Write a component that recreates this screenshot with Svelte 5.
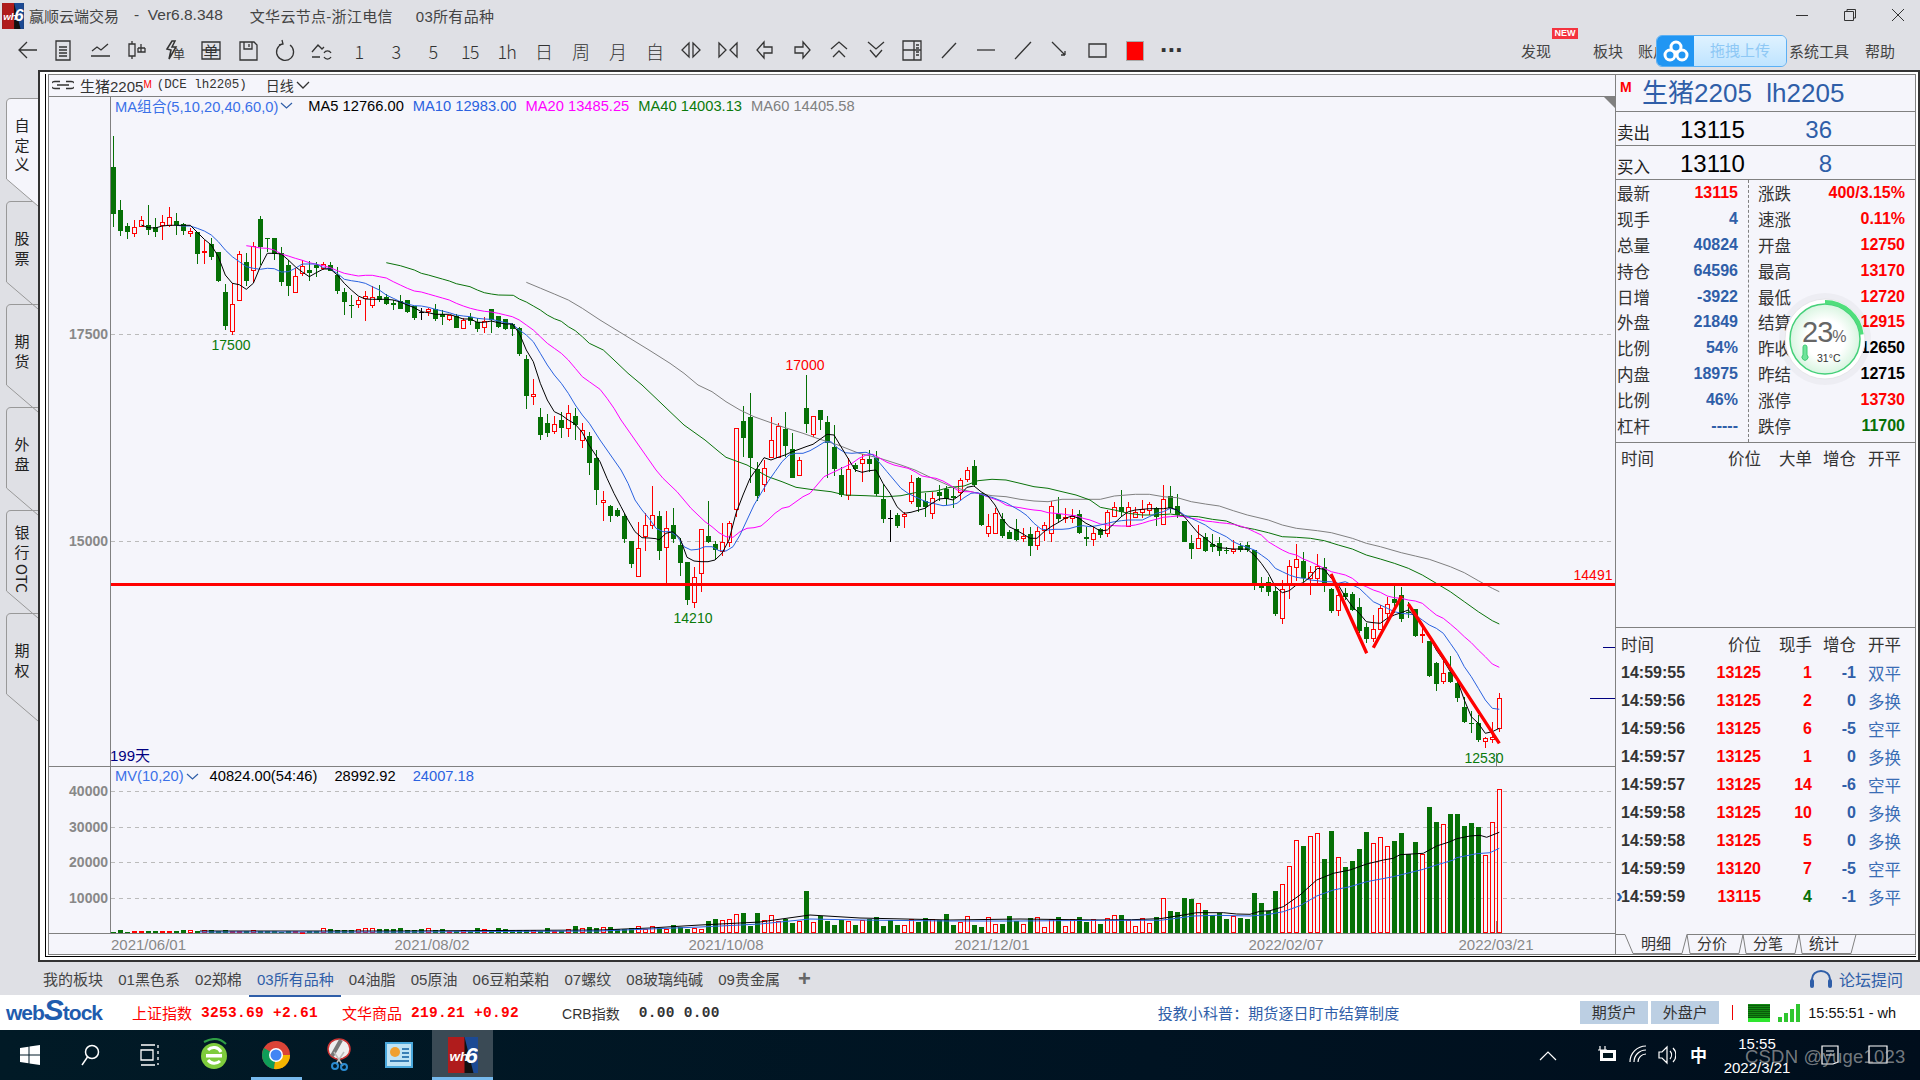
<script>
  const z = (bx, by, s) => s.trim().split(/\s+/).map(p => { const [x, y] = p.split(',').map(Number); return [bx + x / 3, by + y / 3]; });
  const toStr = a => a.map(p => p[0].toFixed(1) + ',' + p[1].toFixed(1)).join(' ');

  const c8 = [['g',48,141,281,320],['g',240,270,332,347],['g',310,318,335,358],['r',300,322,341,350],['r',288,301,319,322],['g',255,315,329,344],['g',295,322,338,350],['r',285,307,315,360],['r',262,292,315,320],['g',280,303,315,345],['g',310,313,335,345],['r',323,334,341,350],['g',336,336,401,432],['r',360,394,398,432],['g',355,372,411,420],['g',395,397,483,485],['g',492,516,617,630],['r',490,553,635,645],['r',393,403,540,542],['g',400,426,483,497],['r',367,377,449,490],['g',288,297,380,435],['g',355,355,359,395],['g',355,355,403,420],['g',382,400,488,497],['g',420,435,497,527],['r',445,469,518,518],['r',420,438,458,468],['g',423,450,458,482],['g',425,435,443,470],['r',425,433,445,450],['g',427,435,452,452],['g',442,465,513,522],['g',505,517,548,585],['g',525,556,560,593],['r',530,541,554,563],['r',513,529,534,603],['r',497,532,557,563],['g',495,528,540,545],['g',522,532,552,555],['g',540,549,554,570],['g',525,543,566,568],['g',540,541,578,580],['g',558,558,594,600],['k',565,576,578,600],['r',565,568,574,587],['g',553,567,597,602],['g',570,582,590,615],['r',585,585,597,602],['g',583,587,624,624],['r',595,601,626,626],['g',578,590,603,615],['g',595,607,627,637],['r',592,602,620,638],['g',567,568,600,640],['g',588,589,622,625],['g',598,598,628,630],['g',610,612,628,648],['g',622,624,702,707],['g',706,718,830,866],['r',777,823,830,855]];
  const cGap = [['g',408,417,435,440],['g',414,423,433,437],['r',416,424,431,434],['g',412,420,428,438],['r',405,413,428,437],['g',408,416,425,440],['r',423,430,440,448],['g',432,436,463,475],['g',450,458,490,505]];
  const c9 = [['r',423,450,455,513],['g',465,468,498,515],['g',473,480,498,500],['g',490,497,567,580],['g',573,573,641,655],['r',517,595,678,680],['r',490,526,560,602],['r',408,496,526,537],['g',482,498,602,630],['r',484,535,593,703],['g',475,525,567,580],['g',565,585,639,678],['g',636,636,750,765],['r',652,682,758,773],['r',537,537,668,725],['g',453,558,577,580],['g',573,582,600,628],['r',518,577,605,617],['r',513,519,575,590],['r',235,235,479,500],['g',168,213,264,322],['g',129,201,324,400],['g',337,358,438,452],['r',330,355,404,426],['r',202,270,320,325],['r',220,229,321,322],['g',185,237,287,320],['g',250,297,384,384],['r',322,331,377,378],['g',75,174,222,250],['r',198,198,251,262],['g',180,180,210,240],['g',197,216,280,385],['g',225,291,357,378],['g',350,375,435,442],['r',325,358,435,450],['g',340,345,358,365],['r',313,328,341,395],['g',300,327,342,365],['g',303,323,432,437],['g',402,447,507,518],['k',480,505,507,576],['g',490,495,527,535],['r',487,492,499,533],['r',375,397,455,462],['g',380,384,470,485],['g',430,453,472,500],['r',425,445,490,507],['g',405,427,440,452],['g',407,417,447,465],['g',410,438,443,475],['r',385,391,428,450],['r',350,361,389,395],['g',330,348,405,410],['g',428,430,527,527],['r',492,529,551,560],['r',473,490,551,552],['g',490,507,558,565],['g',540,547,567,567],['g',508,538,570,572],['r',535,559,566,575],['g',530,552,588,617],['r',530,544,587,600],['r',515,525,541,572],['r',453,469,551,575],['g',442,491,507,518],['r',475,502,506,518],['r',478,498,503,518],['g',480,492,550,552],['g',530,562,569,587],['r',530,550,569,587]];
  const c10 = [['g',203,207,225,233],['r',150,157,221,230],['r',125,142,170,170],['g',90,142,157,170],['r',127,142,200,200],['r',140,155,170,170],['r',120,146,155,175],['r',125,133,150,165],['g',140,145,172,197],['r',75,118,194,194],['g',77,108,145,160],['g',102,138,165,175],['g',183,183,245,245],['g',225,250,267,297],['r',195,235,265,265],['g',220,232,274,276],['g',222,252,260,275],['g',230,250,275,288],['g',262,270,274,282],['r',240,268,274,282],['g',250,258,270,275],['g',245,255,270,275],['g',270,270,372,390],['g',350,372,383,395],['g',350,366,396,408],['g',380,393,462,468],['r',360,388,476,492],['r',300,319,372,417],['r',252,297,320,362],['g',275,303,355,365],['r',318,337,355,405],['r',282,318,353,370],['g',295,320,368,397],['g',385,387,453,460],['r',380,406,452,468],['g',385,399,411,420],['g',395,403,450,452],['g',415,441,512,520],['g',490,502,538,550],['r',465,508,536,545],['r',435,445,508,510],['r',412,431,459,480],['g',378,418,430,458],['g',380,406,477,485],['g',425,456,460,475],['g',447,447,527,530],['r',490,523,527,548],['g',543,543,648,650],['g',605,608,670,692],['r',590,640,665,672],['g',588,635,666,668],['g',655,668,713,725],['g',712,741,785,790],['g',752,790,793,818],['g',765,789,840,846],['r',830,835,844,863],['r',785,832,838,848],['r',700,715,806,815]];

  const conv = (arr, by, k) => arr.map(([c, a, b, d, e]) => [c, by + a / k, by + b / k, by + d / k, by + e / k]);
  const candles = [...conv(c8, 120, 3), ...conv(cGap, 0, 1), ...conv(c9, 350, 3), ...conv(c10, 460, 3)].map((c, i) => {
    const cx = Math.round(113.3 + 7 * i) + 0.5;
    return { cx, c: c[0], wt: c[1], bt: c[2], bb: c[3], wb: c[4] };
  });

  const volTop = [[492,'g'],[475,'r'],[466,'r'],[465,'g'],[480,'r'],[499,'r'],[475,'r'],[490,'r'],[471,'g'],[415,'r'],[453,'g'],[456,'g'],[414,'g'],[417,'g'],[430,'r'],[450,'g'],[465,'g'],[460,'g'],[477,'g'],[468,'r'],[474,'g'],[477,'g'],[399,'g'],[429,'g'],[454,'g'],[393,'g'],[373,'r'],[319,'r'],[241,'r'],[258,'g'],[229,'r'],[220,'r'],[297,'g'],[213,'g'],[292,'r'],[321,'g'],[303,'g'],[267,'g'],[216,'g'],[250,'r'],[232,'r'],[259,'r'],[243,'g'],[219,'g'],[283,'g'],[246,'g'],[283,'r'],[141,'g'],[186,'g'],[193,'r'],[162,'g'],[162,'g'],[198,'g'],[189,'g'],[201,'g'],[286,'r'],[187,'r'],[88,'r']];
  const noise = i => { const v = Math.sin(i * 12.9898) * 43758.5453; return v - Math.floor(v); };
  const bars = [];
  for (let i = 0; i < 199; i++) {
    const cx = candles[i].cx;
    if (i < 141) {
      let base = i < 30 ? 1.2 : i < 65 ? 2 : i < 85 ? 3.5 : 5;
      let h = base + noise(i) * base * 1.6;
      if (i >= 85 && i < 110) h += noise(i + 7) * 7;
      if (i >= 110) h += noise(i + 3) * 6;
      if (i === 99) h = 42;
      if (i === 90 || i === 92) h = 20;
      bars.push({ cx, y: 933 - h, h, c: candles[i].c === 'r' ? 'r' : 'g' });
    } else {
      const [t, c] = volTop[i - 141];
      const y = 760 + t / 3;
      bars.push({ cx, y, h: 933 - y, c });
    }
  }

  const ma5 = toStr([...z(100,120,'124,315 145,323 166,324 187,318 208,316 229,316 250,316 271,316 292,337 313,358 334,375 355,410 376,465 397,490 418,494 439,508 460,490 481,440 502,400 523,400 544,402 565,420 586,440 607,456 628,470 649,458 670,447 691,447 712,465 733,490 754,510 775,528 796,537 817,538 838,538 859,538 880,540 901,546 922,555 943,563 964,575 985,578 1006,583 1027,583 1048,583 1069,590 1090,597 1111,597 1132,607 1153,607 1174,603 1195,608 1216,612 1237,612 1258,640 1279,690 1300,725 1321,790 1342,840 1363,875 1384,885 1405,900'),[575,424],[582,432],[589,445],...z(600,350,'0,335 21,385 42,430 63,470 84,510 105,545 126,563 147,564 168,566 177,570 198,550 219,545 240,565 261,622 282,633 303,635 324,635 345,630 366,610 387,570 408,490 429,435 450,385 471,355 492,323 513,330 534,322 555,315 576,305 597,298 618,290 639,283 660,268 681,253 702,255 723,290 744,325 765,360 786,367 807,362 828,360 849,400 870,430 891,470 912,490 933,487 954,481 975,475 996,460 1017,447 1038,445 1059,450 1080,435 1101,412 1122,408 1143,425 1164,438 1185,465 1206,505 1227,530 1248,540 1269,552 1290,565 1311,565 1332,545 1353,530 1374,518 1395,505 1416,498 1437,505 1458,520 1479,530'),...z(1100,460,'1,213 22,210 43,190 64,170 85,155 106,150 127,148 148,146 169,146 190,146 211,143 232,150 253,170 274,195 295,220 316,235 337,252 358,263 379,265 400,267 421,267 442,268 463,285 484,310 505,340 526,380 547,398 568,392 589,375 610,368 631,350 652,325 673,328 694,355 715,375 736,410 757,440 778,460 799,485 820,488 841,490 862,475 883,465 904,458 925,450 946,470 967,495 988,530 1009,570 1030,600 1051,635 1072,660 1093,720 1114,770 1135,790 1156,820 1177,815 1198,805')]);
  const ma10 = toStr([...z(100,120,'229,316 250,318 271,318 292,325 313,333 334,345 355,365 376,390 397,410 418,425 439,440 460,445 481,448 502,445 523,446 544,456 565,455 586,445 607,432 628,432 649,432 670,443 691,447 712,460 733,478 754,482 775,485 796,490 817,500 838,510 859,525 880,535 901,545 922,552 943,557 964,558 985,562 1006,568 1027,573 1048,578 1069,585 1090,588 1111,590 1132,595 1153,597 1174,598 1195,603 1216,608 1237,612 1258,630 1279,645 1300,665 1321,700 1342,735 1363,765 1384,790 1405,820 1426,855 1447,885 1468,910'),...z(600,350,'0,270 21,300 42,330 63,360 84,400 105,450 126,480 147,505 168,535 189,545 210,545 231,558 252,590 273,600 294,598 315,590 336,590 357,602 378,603 399,590 420,555 441,510 462,465 483,430 504,395 525,365 546,335 567,315 588,310 609,310 630,302 651,290 672,277 693,275 714,295 735,308 756,310 777,308 798,307 819,315 840,340 861,365 882,390 903,415 924,430 945,440 966,450 987,458 1008,462 1029,467 1050,465 1071,460 1092,443 1113,430 1134,428 1155,437 1176,442 1197,450 1218,458 1239,470 1260,482 1281,497 1302,520 1323,537 1344,540 1365,538 1386,538 1407,536 1428,530 1449,527 1470,530 1491,527'),...z(1100,460,'1,195 22,190 43,185 64,182 85,180 106,180 127,180 148,170 169,160 190,155 211,145 232,150 253,165 274,175 295,185 316,195 337,210 358,220 379,230 400,245 421,255 442,262 463,270 484,285 505,300 526,325 547,335 568,345 589,352 610,355 631,360 652,362 673,365 694,365 715,370 736,365 757,375 778,385 799,405 820,425 841,435 862,445 883,455 904,460 925,462 946,465 967,480 988,495 1009,505 1030,520 1051,550 1072,580 1093,620 1114,650 1135,685 1156,720 1177,745 1198,748')]);
  const ma20 = toStr([...z(100,120,'439,377 460,380 481,384 502,385 523,390 544,402 565,408 586,415 607,421 628,428 649,433 670,437 691,443 712,452 733,460 754,464 775,468 796,466 817,466 838,470 859,474 880,485 901,495 922,505 943,513 964,516 985,522 1006,528 1027,534 1048,540 1069,550 1090,558 1111,565 1132,570 1153,574 1174,576 1195,580 1216,585 1237,590 1258,600 1279,615 1300,630 1321,650 1342,670 1363,685 1384,700 1405,720 1426,745 1447,770 1468,785'),...z(600,350,'0,118 21,145 42,175 63,210 84,240 105,270 126,300 147,330 168,360 189,385 210,405 231,425 252,450 273,475 294,495 315,515 336,530 357,548 378,560 399,562 420,545 441,535 462,533 483,528 504,510 525,490 546,475 567,470 588,455 609,440 630,430 651,405 672,380 693,370 714,360 735,350 756,340 777,325 798,315 819,313 840,325 861,337 882,345 903,350 924,355 945,365 966,378 987,382 1008,385 1029,393 1050,405 1071,420 1092,425 1113,425 1134,430 1155,437 1176,445 1197,452 1218,465 1239,470 1260,473 1281,477 1302,480 1323,482 1344,488 1365,490 1386,492 1407,495 1428,497 1449,505 1470,510 1491,518'),...z(1100,460,'1,192 22,195 43,197 64,198 85,198 106,195 127,190 148,183 169,178 190,172 211,170 232,168 253,170 274,175 295,178 316,183 337,185 358,188 379,190 400,193 421,198 442,205 463,215 484,225 505,245 526,258 547,270 568,280 589,285 610,297 631,305 652,315 673,325 694,335 715,340 736,345 757,355 778,372 799,380 820,390 841,397 862,408 883,413 904,415 925,420 946,423 967,430 988,448 1009,465 1030,475 1051,492 1072,510 1093,530 1114,548 1135,570 1156,590 1177,612 1198,622')]);
  const ma40 = toStr([...z(100,120,'859,428 901,437 943,450 964,460 985,465 1027,477 1048,483 1069,491 1110,500 1132,510 1153,518 1174,522 1195,525 1240,526 1258,537 1279,546 1300,558 1321,570 1342,585 1363,596 1384,604 1405,620 1426,632 1447,650 1468,670'),...z(600,350,'10,0 42,30 84,70 126,105 168,145 210,185 252,225 273,240 315,270 357,305 378,322 441,345 504,380 546,395 588,412 630,418 693,425 735,435 798,437 861,440 903,437 945,428 1008,423 1050,412 1092,408 1134,392 1176,388 1218,390 1260,400 1302,410 1344,415 1386,425 1428,435 1470,450'),...z(1100,460,'1,142 43,150 85,160 127,165 169,165 211,162 253,168 295,170 337,178 379,183 421,200 463,208 505,218 547,230 589,232 631,235 673,242 715,255 757,267 799,285 841,297 883,310 925,325 967,345 1009,370 1051,395 1093,425 1135,455 1177,482 1198,492')]);
  const ma60 = toStr([...z(100,120,'1279,487 1322,505 1363,522 1405,540 1447,565 1500,600'),...z(600,350,'147,0 210,40 252,70 294,105 336,125 378,155 420,180 462,200 504,215 546,230 609,250 651,265 714,285 777,310 840,325 903,345 945,360 987,380 1050,408 1092,420 1134,430 1176,437 1218,440 1260,448 1302,453 1344,455 1386,448 1428,448 1470,448'),...z(1100,460,'1,118 43,108 106,103 148,103 190,110 232,113 274,125 316,132 358,138 400,152 442,165 505,180 547,195 589,205 652,212 694,218 757,235 799,250 841,260 904,278 946,288 988,298 1051,320 1093,338 1135,362 1177,385 1198,395')]);
  const mvK = toStr([[200,931],[400,931],[600,930],[650,928],[700,925],[760,922],[810,915],[860,918],[950,920],[1020,919],[1100,920],...z(1100,760,'55,479 95,479 180,476 250,465 290,458 370,458 410,462 450,463 480,454 510,452 550,440 600,405 650,360 700,340 750,330 800,312 850,300 880,295 900,284 970,280 1010,258 1050,245 1070,236 1110,228 1140,226 1160,232 1198,217')]);
  const mvB = toStr([[200,932],[400,932],[600,931],[650,929],[700,927],[760,924],[810,919],[860,920],[950,921],[1020,921],...z(1100,760,'0,481 180,481 220,476 280,468 350,466 450,468 500,464 550,455 600,437 650,408 700,390 750,380 800,365 880,350 970,328 1000,318 1060,300 1070,293 1130,281 1170,278 1198,265')]);

  const toolsA = [
    'M22 11H5M12 3l-8 8 8 8',
    'M4 2h14v19H4zM7 8h8M7 11h8M7 14h8M7 17h8',
    'M2 17h19M3 12l5-4 4 3 7-6',
    'M6 2v3M3 5h6v12H3zM6 17v3M15 5v5M12 9h7M15 9v4M12 9v4h7V9',
    null,
    null,
    'M3 3h14l3 3v15H3zM7 3v7h8V3M12 5v3',
    'M16 6a8.500 8.500 0 1 1-8-1M8 1l1 4-4 1',
    'M2 13l6-7 4 4 2-2M2 18h8M14 14a4 4 0 0 1 7 0M21 18a4 4 0 0 1-7 0'
  ];
  const txt = ['1', '3', '5', '15', '1h', '日', '周', '月', '自'];
  const toolsB = [
    'M9 4L2 11l7 7zM13 4l7 7-7 7z',
    'M2 4l7 7-7 7zM20 4l-7 7 7 7z',
    'M10 3L3 11l7 8v-5h8V8h-8z',
    'M12 3l7 8-7 8v-5H4V8h8z',
    'M3 10l8-7 8 7M5 18l6-6 6 6',
    'M3 3l8 7 8-7M5 11l6 7 6-7',
    'M2 2h18v19H2zM2 11h18M13 2v19M15 6h3M15 9h3M15 13h3M15 16h3',
    'M4 19L18 4',
    'M2 11h18',
    'M4 19L18 4M3 20l2-2M17 5l2-2',
    'M3 3l13 13M16 16v-4M16 16h-4',
    'M3 5h17v13H3z'
  ];

  const left = [['最新','13115','red'],['现手','4','blue'],['总量','40824','blue'],['持仓','64596','blue'],['日增','-3922','blue'],['外盘','21849','blue'],['比例','54%','blue'],['内盘','18975','blue'],['比例','46%','blue'],['杠杆','-----','blue']];
  const right = [['涨跌','400/3.15%','red'],['速涨','0.11%','red'],['开盘','12750','red'],['最高','13170','red'],['最低','12720','red'],['结算','12915','red'],['昨收','12650','black'],['昨结','12715','black'],['涨停','13730','red'],['跌停','11700','green']];
  const trades = [['14:59:55','13125','1','-1','双平'],['14:59:56','13125','2','0','多换'],['14:59:56','13125','6','-5','空平'],['14:59:57','13125','1','0','多换'],['14:59:57','13125','14','-6','空平'],['14:59:58','13125','10','0','多换'],['14:59:58','13125','5','0','多换'],['14:59:59','13120','7','-5','空平'],['14:59:59','13115','4','-1','多平']];
  const sideTabs = [['自定义'], ['股票'], ['期货'], ['外盘'], ['银行', 'OTC'], ['期权']];
  const blocks = ['我的板块', '01黑色系', '02郑棉', '03所有品种', '04油脂', '05原油', '06豆粕菜粕', '07螺纹', '08玻璃纯碱', '09贵金属'];
  const dates = [['2021/06/01', 148.5], ['2021/08/02', 432], ['2021/10/08', 726], ['2021/12/01', 992], ['2022/02/07', 1286], ['2022/03/21', 1496]];
  const volAxis = [['40000', 791], ['30000', 827], ['20000', 862], ['10000', 898]];
  const subTabs = ['明细', '分价', '分笔', '统计'];
</script>

{#snippet whLogo(w, h)}
  <svg width={w} height={h} viewBox="0 0 20 24">
    <rect width="20" height="24" fill="#111" />
    <rect width="11" height="24" fill="#b01c1c" />
    <path d="M11 0h9v24h-3z" fill="#1c4a94" />
    <text x="1" y="16" class="wh">wh</text>
    <text x="11.500" y="17" class="six">6</text>
  </svg>
{/snippet}

<div class="screen">
  <header class="titlebar">
    <span class="logo">{@render whLogo(22, 26)}</span>
    <span class="t1">赢顺云端交易</span>
    <span class="t2">-&nbsp; Ver6.8.348</span>
    <span class="t3">文华云节点-浙江电信</span>
    <span class="t4">03所有品种</span>
    <div class="winbtns">
      <svg width="14" height="14" viewBox="0 0 14 14"><path d="M1 7.500h12" /></svg>
      <svg width="14" height="14" viewBox="0 0 14 14"><path d="M1.500 3.500h9v9h-9zM4 3.500V1.500h8.500V10h-2" /></svg>
      <svg width="14" height="14" viewBox="0 0 14 14"><path d="M1 1l12 12M13 1L1 13" /></svg>
    </div>
  </header>

  <nav class="toolbar">
    {#each toolsA as d, i}
      <span class="tool">
        <svg width="23" height="23" viewBox="0 0 23 23">
          {#if d}
            <path {d} />
          {:else if i === 4}
            <path d="M4 10L9 2h3L9 8h4L6 20l2-9z" class="solidish" />
            <text x="10" y="20" class="mini">单</text>
          {:else}
            <path d="M2 3h18v17H2zM2 11h18" />
            <text x="3.500" y="18" class="mini big">单</text>
          {/if}
        </svg>
      </span>
    {/each}
    {#each txt as t}<span class="tool txt">{t}</span>{/each}
    {#each toolsB as d}
      <span class="tool"><svg width="23" height="23" viewBox="0 0 23 23"><path {d} /></svg></span>
    {/each}
    <span class="tool"><span class="redsq"></span></span>
    <span class="tool dots">···</span>
    <div class="menu">
      <span class="m-find">发现<b class="new">NEW</b></span>
      <span class="m-block">板块</span>
      <span class="m-acct">账户</span>
      <span class="m-sys">系统工具</span>
      <span class="m-help">帮助</span>
    </div>
  </nav>

  <div class="pill">
    <span class="pill-ic">
      <svg width="26" height="22" viewBox="0 0 26 22"><circle cx="13" cy="7" r="5" /><circle cx="7" cy="15" r="5" /><circle cx="19" cy="15" r="5" /></svg>
    </span>
    <span class="pill-t">拖拽上传</span>
  </div>

  <main class="body">
    <aside class="side">
      {#each sideTabs as [t, latin], i}
        <div class="stab" class:stab-on={i === 0}>
          <svg class="stab-bg" width="32" height="109" viewBox="0 0 32 109"><path d="M32 .5H5Q.5 .5 .5 5V81L32 108" /></svg>
          <span class="stab-t">{t}{#if latin}<span class="otc">{latin}</span>{/if}</span>
        </div>
      {/each}
    </aside>

    <section class="frame">
      <div class="frame-in">
        <div class="term">
          <div class="chartcol">
            <div class="chead">
              <svg class="link" width="22" height="10" viewBox="0 0 22 10"><path d="M8 1.500H3a3.500 3 0 0 0 0 7h5M14 1.500h5a3.500 3 0 0 1 0 7h-5M5 5h12" /></svg>
              <span class="cname">生猪2205<sup>M</sup></span>
              <span class="ccode">(DCE lh2205)</span>
              <span class="cper">日线<svg width="14" height="8" viewBox="0 0 14 8"><path d="M1 1l6 6 6-6" /></svg></span>
            </div>
            <div class="chart">
              <svg class="plot" width="1566" height="858" viewBox="49 96 1566 858">
                <path class="axis" d="M110.500 96V933.500M49 933.500H1616M49 766.500H1616" />
                <path class="corner" d="M1603 96h12v12z" />
                <path class="grid" d="M111 334.500H1615M111 541.500H1615" />
                {#each volAxis as [, y]}<path class="grid" d="M111 {y + .5}H1615" />{/each}
                <text class="yl" x="108" y="339">17500</text>
                <text class="yl" x="108" y="546">15000</text>
                {#each volAxis as [l, y]}<text class="yl" x="108" y={y + 5}>{l}</text>{/each}

                {#each candles as k}
                  <path class={'wick ' + k.c} d="M{k.cx} {k.wt.toFixed(1)}V{k.wb.toFixed(1)}" />
                  {#if k.c === 'r'}
                    <rect class="body-r" x={k.cx - 2} y={Math.round(k.bt) + .5} width="4" height={Math.max(1, Math.round(k.bb - k.bt))} />
                  {:else if k.c === 'g'}
                    <rect class="body-g" x={k.cx - 2.5} y={Math.round(k.bt)} width="5" height={Math.max(1, Math.round(k.bb - k.bt))} />
                  {:else}
                    <path class="wick k" d="M{k.cx - 2.500} {k.bt.toFixed(0)}.500h5" />
                  {/if}
                {/each}

                <polyline class="ma m60" points={ma60} />
                <polyline class="ma m40" points={ma40} />
                <polyline class="ma m20" points={ma20} />
                <polyline class="ma m10" points={ma10} />
                <polyline class="ma m5" points={ma5} />

                <path class="hline" d="M111 584.500H1615" />
                <path class="draw" d="M1331 574L1366.700 653.300M1373.300 647.700L1401.700 596M1408.300 604L1499.300 743.300" />
                <path class="tick" d="M1603 647.500H1615M1590 698.500H1615" />
                <path class="cursor" d="M1496.500 753V766M1496.500 921V933" />

                <text class="lb green" x="231" y="350">17500</text>
                <text class="lb red" x="805" y="370">17000</text>
                <text class="lb green" x="693" y="623">14210</text>
                <text class="lb green" x="1484" y="763">12530</text>
                <text class="lb red" x="1593" y="580">14491</text>

                {#each bars as b}
                  {#if b.c === 'r'}
                    <rect class="body-r" x={b.cx - 2} y={Math.round(b.y) + .5} width="4" height={Math.max(1, Math.round(b.h) - 1)} />
                  {:else}
                    <rect class="body-g" x={b.cx - 2.5} y={Math.round(b.y)} width="5" height={Math.round(b.h)} />
                  {/if}
                {/each}
                <polyline class="ma mv-k" points={mvK} />
                <polyline class="ma mv-b" points={mvB} />

                {#each dates as [d, x]}<text class="dl" {x} y="950">{d}</text>{/each}
              </svg>

              <div class="legend l1">
                <span class="ma-combo">MA组合(5,10,20,40,60,0)<svg width="13" height="7" viewBox="0 0 13 7"><path d="M1 1l5.500 5 5.500-5" /></svg></span>
                <span class="c-k">MA5 12766.00</span>
                <span class="c-b">MA10 12983.00</span>
                <span class="c-m">MA20 13485.25</span>
                <span class="c-g">MA40 14003.13</span>
                <span class="c-y">MA60 14405.58</span>
              </div>
              <div class="days">199天</div>
              <div class="legend l2">
                <span class="ma-combo">MV(10,20)<svg width="13" height="7" viewBox="0 0 13 7"><path d="M1 1l5.500 5 5.500-5" /></svg></span>
                <span class="c-k">40824.00(54:46)</span>
                <span class="c-k">28992.92</span>
                <span class="c-b">24007.18</span>
              </div>
            </div>
          </div>

          <aside class="panel">
            <div class="p-title"><b>M</b><span>生猪2205&nbsp; lh2205</span></div>
            <div class="quote"><span class="q-l">卖出</span><span class="q-p">13115</span><span class="q-v">36</span></div>
            <div class="quote"><span class="q-l">买入</span><span class="q-p">13110</span><span class="q-v">8</span></div>
            <div class="stats">
              <div class="col c-left">
                {#each left as [a, b, c]}<div class="st"><span>{a}</span><b class={c}>{b}</b></div>{/each}
              </div>
              <div class="col c-right">
                {#each right as [a, b, c]}<div class="st"><span>{a}</span><b class={c}>{b}</b></div>{/each}
              </div>
            </div>
            <div class="tsec top">
              <div class="tr th"><span>时间</span><span>价位</span><span>大单</span><span>增仓</span><span>开平</span></div>
            </div>
            <div class="tsec bottom">
              <div class="tr th"><span>时间</span><span>价位</span><span>现手</span><span>增仓</span><span>开平</span></div>
              {#each trades as [t, p, v, d, o], i}
                <div class="tr td">
                  <span class="tm">{t}</span><span class="red">{p}</span><span class={i === 8 ? 'green' : 'red'}>{v}</span><span class="blue">{d}</span><span class="op">{o}</span>
                  {#if i === 8}<i class="rowmark">›</i>{/if}
                </div>
              {/each}
            </div>
            <div class="subtabs">
              <svg class="st-bg" width="299" height="20" viewBox="0 0 299 20"><path d="M0 .5H9L17 19.500H66L71 .5M71 .5L74 19.500H123L127 .5M127 .5L130 19.500H179L183 .5M183 .5L186 19.500H235L240 .5M71 .5H299" /></svg>
              {#each subTabs as s}<span>{s}</span>{/each}
            </div>
          </aside>
        </div>
      </div>
    </section>
  </main>

  <div class="gauge">
    <svg width="96" height="96" viewBox="0 0 96 96">
      <defs><radialGradient id="gfill"><stop offset="55%" stop-color="#ffffff" /><stop offset="100%" stop-color="#d8f5e0" /></radialGradient></defs>
      <circle cx="48" cy="48" r="46" fill="#000" opacity=".03" />
      <circle cx="48" cy="48" r="40" fill="#fff" stroke="#e6e6ea" />
      <circle cx="48" cy="48" r="35" fill="url(#gfill)" stroke="#45d07a" stroke-width="1.500" />
      <circle cx="48" cy="48" r="37" fill="none" stroke="#50de7c" stroke-width="4" stroke-dasharray="53.500 300" transform="rotate(-90 48 48)" />
      <path d="M26 64a3 3 0 1 0 4 0v-8a2 2 0 0 0-4 0z" fill="#6fe39a" stroke="#3ccb72" />
    </svg>
    <span class="g-num">23<small>%</small></span>
    <span class="g-temp">31°C</span>
  </div>

  <div class="blocks">
    {#each blocks as b, i}<span class:on={i === 3}>{b}</span>{/each}
    <span class="plus">+</span>
    <span class="forum">
      <svg width="24" height="18" viewBox="0 0 24 18"><path d="M3 13V9a9 8 0 0 1 18 0v4" /><rect x="1" y="9" width="4" height="9" rx="2" /><rect x="19" y="9" width="4" height="9" rx="2" /></svg>
      论坛提问
    </span>
  </div>

  <footer class="status">
    <span class="ws">web<em>S</em>tock</span>
    <span class="i1 red">上证指数</span><b class="iv red">3253.69 +2.61</b>
    <span class="i2 red">文华商品</span><b class="iv red">219.21 +0.92</b>
    <span class="i3">CRB指数</span><b class="iv i3v">0.00 0.00</b>
    <span class="tip">投教小科普：期货逐日盯市结算制度</span>
    <span class="acct a1">期货户</span>
    <span class="acct">外盘户</span>
    <i class="rdiv"></i>
    <span class="meter"></span>
    <span class="signal">{#each [5, 9, 13, 18] as h}<i class="sg{h}"></i>{/each}</span>
    <span class="clock">15:55:51 - wh</span>
  </footer>

  <div class="taskbar">
    <span class="tb win"><svg width="22" height="22" viewBox="0 0 22 22"><path fill="#fff" d="M1 4l8.500-1.300V10.500H1zM10.500 2.500L21 1V10.500H10.500zM1 11.500h8.500v7.800L1 18zM10.500 11.500H21V21l-10.500-1.500z" /></svg></span>
    <span class="tb search"><svg width="22" height="24" viewBox="0 0 22 24"><circle cx="13" cy="9" r="6.500" /><path d="M8.500 14L3 22" /></svg></span>
    <span class="tb view"><svg width="22" height="24" viewBox="0 0 22 24"><path d="M2 2h14M2 22h14M2 7h12v10H2zM19 2v3M19 8v3M19 14v3M19 20v2" /></svg></span>
    <span class="tb ie"><svg width="30" height="34" viewBox="0 0 30 34"><circle cx="15" cy="18" r="13" fill="#7ecb3c" /><path d="M5 4q13-7 22 2" stroke="#2f9e44" stroke-width="2" /><rect x="7" y="16" width="16" height="3.500" fill="#fff" /><path d="M9 12a8 8 0 0 1 13 2M21 23a8 8 0 0 1-12-1" stroke="#fff" stroke-width="3" /></svg></span>
    <span class="tb chrome"><svg width="30" height="30" viewBox="0 0 30 30"><circle cx="15" cy="15" r="14" fill="#db4437" /><path d="M15 15L3 8a14 14 0 0 0 10 21z" fill="#0f9d58" /><path d="M15 15h14a14 14 0 0 1-16 14z" fill="#f4b400" /><circle cx="15" cy="15" r="7" fill="#fff" /><circle cx="15" cy="15" r="5.500" fill="#4285f4" /></svg></span>
    <span class="tb snip"><svg width="30" height="34" viewBox="0 0 30 34"><ellipse cx="15" cy="11" rx="11" ry="10" fill="#eee" stroke="#c33" stroke-width="1.500" /><path d="M17 2L8 18" stroke="#777" stroke-width="4" /><path d="M10 14l9 14M20 14l-8 12" stroke="#bbb" stroke-width="1.500" /><circle cx="20" cy="29" r="3" fill="none" stroke="#2a8bd0" stroke-width="2" /><circle cx="11" cy="28" r="3" fill="none" stroke="#2a8bd0" stroke-width="2" /></svg></span>
    <span class="tb ppt"><svg width="28" height="26" viewBox="0 0 28 26"><rect width="28" height="26" fill="#4aa8dc" /><rect x="2" y="2" width="24" height="22" fill="#bfe3f5" /><circle cx="10" cy="10" r="5" fill="#f0a030" /><path d="M17 7h7M17 11h7M17 15h7M5 19h19" stroke="#3a7fb5" stroke-width="2" /></svg></span>
    <span class="tb tb-on">{@render whLogo(30, 36)}</span>
    <div class="tray">
      <svg class="t-up" width="18" height="10" viewBox="0 0 18 10"><path d="M1 9l8-8 8 8" /></svg>
      <svg class="t-bat" width="20" height="18" viewBox="0 0 20 18"><path d="M2 1v4M7 1v4M0 5h9" /><rect x="2" y="5" width="16" height="11" fill="#fff" /><rect x="5" y="8" width="10" height="5" fill="#01161f" /></svg>
      <svg class="t-wifi" width="18" height="18" viewBox="0 0 18 18"><path d="M1 17A16 16 0 0 1 17 1M5 17A12 12 0 0 1 17 5M9 17a8 8 0 0 1 8-8" /></svg>
      <svg class="t-vol" width="18" height="20" viewBox="0 0 18 20"><path d="M1 7h3l5-5v16l-5-5H1zM12 6a6 6 0 0 1 0 8M15 3a10 10 0 0 1 0 14" /></svg>
      <span class="t-ime">中</span>
      <span class="t-clock"><span>15:55</span><span>2022/3/21</span></span>
      <svg class="t-note" width="20" height="20" viewBox="0 0 20 20"><path d="M2 1h16v16l-5 2H2zM6 6h8M6 10h8" /></svg>
      <svg class="t-desk" width="20" height="20" viewBox="0 0 20 20"><path d="M1 1h18v17H1z" /></svg>
    </div>
    <span class="wm">CSDN @yuge1023</span>
    <i class="ind i-chrome"></i>
    <i class="ind i-wh"></i>
  </div>
</div>

<style>
  :global(body) { margin: 0; background: #dfe0e5; }
  .screen { position: relative; width: 1920px; height: 1080px; overflow: hidden; display: flex; flex-direction: column; background: #dfe0e5; color: #333; font: 15px "Liberation Sans", "Noto Sans CJK SC", sans-serif; }
  svg { display: block; }
  svg path:not([fill]) { fill: none; }
  .wh { font: italic 700 9px "Liberation Sans", sans-serif; fill: #fff; }
  .six { font: italic 700 15px "Liberation Sans", sans-serif; fill: #fff; }

  .titlebar { height: 30px; flex: none; display: flex; align-items: center; white-space: nowrap; color: #444; font-size: 15px; }
  .logo { margin: 2px 0 0 2px; width: 27px; flex: none; }
  .t2 { margin-left: 15px; font-size: 15.500px; }
  .t3 { margin-left: 27px; letter-spacing: .3px; }
  .t4 { margin-left: 23px; letter-spacing: .3px; }
  .winbtns { margin-left: auto; display: flex; gap: 34px; padding-right: 15px; }
  .winbtns path { stroke: #333; stroke-width: 1; }

  .toolbar { height: 40px; flex: none; display: flex; align-items: center; padding-left: 8px; padding-top: 1px; box-sizing: border-box; }
  .tool { width: 36.95px; flex: none; height: 26px; display: flex; align-items: center; justify-content: center; color: #333; }
  .tool path { stroke: #333; stroke-width: 1.300; }
  .tool .solidish { stroke-width: 1.500; }
  .mini { font: 12px "Noto Sans CJK SC", sans-serif; fill: #333; }
  .big { font-size: 15px; }
  .txt { font: 300 18px "Noto Sans CJK SC", sans-serif; letter-spacing: -1px; }
  .redsq { width: 16px; height: 18px; background: #f00; border: 1px solid #aaa; }
  .dots { font-size: 26px; font-weight: 700; letter-spacing: -1px; }
  .menu { margin-left: auto; display: flex; font-size: 15px; white-space: nowrap; padding-right: 25px; color: #444; }
  .m-find { position: relative; }
  .new { position: absolute; left: 31px; top: -12px; width: 26px; height: 11px; background: #f4333e; color: #fff; font: 700 9px/11px "Liberation Sans", sans-serif; text-align: center; }
  .m-block { margin-left: 42px; }
  .m-acct { margin-left: 15px; }
  .m-sys { margin-left: 121px; }
  .m-help { margin-left: 16px; }

  .pill { position: absolute; left: 1656px; top: 35px; width: 131px; height: 32px; border-radius: 6px; overflow: hidden; display: flex; box-sizing: border-box; border: 1px solid #5bb0f5; }
  .pill-ic { width: 37px; background: #2196f3; display: flex; align-items: center; justify-content: center; }
  .pill-ic circle { fill: none; stroke: #fff; stroke-width: 3; }
  .pill-t { flex: 1; text-align: center; line-height: 30px; color: #8ec8f5; background: linear-gradient(#dff2ff, #bfe4ff); }

  .body { flex: 1; display: flex; min-height: 0; }
  .side { width: 38px; flex: none; box-sizing: border-box; padding: 28px 0 0 6px; }
  .stab { position: relative; width: 32px; height: 103px; display: flex; align-items: center; justify-content: center; }
  .stab-bg { position: absolute; left: 0; top: 0; overflow: visible; }
  .stab-bg path { stroke: #999; stroke-width: 1; fill: #dfe0e5; }
  .stab-on { z-index: 1; }
  .stab-on .stab-bg path { fill: #f5f5fb; }
  .stab-t { position: relative; writing-mode: vertical-rl; font-size: 15px; letter-spacing: 4.500px; color: #222; margin-top: -5px; font-family: "Noto Sans CJK SC", sans-serif; }
  .otc { letter-spacing: 0; }

  .frame { flex: 1; min-width: 0; box-sizing: border-box; border: 2px solid #333; background: #fff; padding: 2px 2px 3px 5px; display: flex; }
  .frame-in { flex: 1; min-width: 0; border-left: 1px solid #000; border-bottom: 1px solid #000; padding: 0 0 1px 2px; display: flex; }
  .term { flex: 1; min-width: 0; border: 1px solid #808080; background: #f5f5fb; display: flex; }
  .chartcol { width: 1566px; flex: none; border-right: 1px solid #808080; box-sizing: content-box; display: flex; flex-direction: column; }
  .chead { height: 20px; border-bottom: 1px solid #808080; display: flex; align-items: center; padding: 0 0 1px 3px; box-sizing: content-box; margin-bottom: -1px; white-space: nowrap; font-size: 15px; background: #f5f5fb; }
  .link path { stroke: #333; stroke-width: 1.500; }
  .cname { margin-left: 6px; }
  .cname sup { color: #f00; font-size: 10px; line-height: 0; vertical-align: 4px; }
  .ccode { font: 12.500px "Liberation Mono", monospace; margin-left: 5px; }
  .cper { margin-left: 19px; display: flex; align-items: center; gap: 2px; font-size: 14px; }
  .cper path { stroke: #333; stroke-width: 1.300; }

  .chart { position: relative; flex: 1; }
  .plot path.axis { stroke: #808080; stroke-width: 1; }
  .plot path.corner { fill: #808080; }
  .plot path.grid { stroke: #bbb; stroke-width: 1; stroke-dasharray: 4 4; }
  .yl { font: 700 14px "Liberation Sans", sans-serif; fill: #888; text-anchor: end; }
  .wick { stroke-width: 1; shape-rendering: crispEdges; }
  .plot .wick.g { stroke: #067006; }
  .plot .wick.r { stroke: #f00; }
  .plot .wick.k { stroke: #000; }
  .body-g { fill: #067006; shape-rendering: crispEdges; }
  .body-r { fill: #f5f5fb; stroke: #f00; stroke-width: 1; shape-rendering: crispEdges; }
  .ma { fill: none; stroke-width: 1; }
  .m5, .mv-k { stroke: #000; }
  .m10, .mv-b { stroke: #2a62e0; }
  .m20 { stroke: #f0f; }
  .m40 { stroke: #0a730a; }
  .m60 { stroke: #808080; }
  .plot path.hline { stroke: #f00; stroke-width: 3; }
  .plot path.draw { stroke: #f00; stroke-width: 3.300; }
  .plot path.tick { stroke: #000080; stroke-width: 1; }
  .plot path.cursor { stroke: #808080; stroke-width: 1; }
  .lb { font: 14px "Liberation Sans", sans-serif; text-anchor: middle; }
  .lb.green { fill: #0a7a0a; }
  .lb.red { fill: #f00; }
  .dl { font: 15px "Liberation Sans", sans-serif; fill: #888; text-anchor: middle; }

  .legend { position: absolute; left: 66px; display: flex; font-size: 14.700px; white-space: nowrap; align-items: center; }
  .l1 { top: -1px; }
  .l2 { top: 672px; }
  .ma-combo { color: #3a70e8; display: flex; align-items: center; gap: 2px; }
  .ma-combo path { stroke: #2f5ea8; stroke-width: 1.200; }
  .c-k { color: #000; }
  .c-b { color: #2a62e0; }
  .c-m { color: #f0f; }
  .c-g { color: #0a7a0a; }
  .c-y { color: #808080; }
  .l1 span + span { margin-left: 9px; }
  .l1 span.c-k { margin-left: 15px; }
  .l2 span + span { margin-left: 17px; }
  .l2 .c-k:nth-child(2) { margin-left: 11px; }
  .days { position: absolute; left: 61px; top: 648px; font-size: 15px; color: #000080; }

  .panel { flex: 1; min-width: 0; display: flex; flex-direction: column; position: relative; }
  .p-title { height: 36px; border-bottom: 1px solid #808080; position: relative; color: #2f5ea8; font-size: 26px; line-height: 36px; padding-left: 26px; white-space: nowrap; }
  .p-title b { position: absolute; left: 4px; top: 5px; font-size: 14px; line-height: 14px; color: #f00; }
  .quote { height: 33px; border-bottom: 1px solid #808080; position: relative; flex: none; }
  .q-l { position: absolute; left: 1px; bottom: 2px; font-size: 16.500px; line-height: 20px; color: #222; }
  .q-p { position: absolute; left: 64px; top: 4px; font-size: 24px; line-height: 28px; color: #000; }
  .q-v { position: absolute; right: 83px; top: 4px; font-size: 24px; line-height: 28px; color: #2f5ea8; }
  .stats { height: 262px; border-bottom: 1px solid #808080; display: flex; flex: none; }
  .col { display: flex; flex-direction: column; }
  .c-left { width: 133px; border-right: 1px dashed #808080; padding: 0 10px 0 1px; box-sizing: border-box; }
  .c-right { flex: 1; padding: 0 10px 0 9px; }
  .st { height: 25.900px; display: flex; align-items: center; justify-content: space-between; font-size: 16.500px; color: #333; }
  .st b { font-size: 16px; font-family: "Liberation Sans", sans-serif; }
  .red { color: #f00; }
  .blue { color: #2f5ea8; }
  .black { color: #000; }
  .green { color: #067006; }
  .tsec.top { height: 185px; flex: none; border-bottom: 1px solid #808080; box-sizing: border-box; padding-top: 2px; }
  .tsec.bottom { flex: 1; padding-top: 3px; }
  .tr { display: grid; grid-template-columns: 79px 61px 51px 44px 45px; padding-left: 5px; position: relative; align-items: center; }
  .tr span { text-align: right; }
  .tr span:first-child { text-align: left; }
  .th { height: 26px; font-size: 16.500px; color: #333; }
  .td { height: 28px; font: 700 16px "Liberation Sans", "Noto Sans CJK SC", sans-serif; }
  .td:nth-child(2) { margin-top: 2px; }
  .tm { color: #333; }
  .td .op { font-weight: 400; color: #3a6db5; font-family: "Noto Sans CJK SC", sans-serif; font-size: 16.500px; }
  .rowmark { position: absolute; left: 0; top: 2px; font-style: normal; color: #2f5ea8; font-size: 20px; line-height: 20px; }
  .subtabs { height: 20px; flex: none; position: relative; display: flex; padding-left: 12px; font-size: 15px; line-height: 20px; }
  .subtabs span { width: 56px; text-align: center; position: relative; color: #333; }
  .st-bg { position: absolute; left: 0; top: 0; }
  .st-bg path { stroke: #808080; stroke-width: 1; }

  .gauge { position: absolute; left: 1777px; top: 291px; width: 96px; height: 96px; }
  .gauge svg { position: absolute; left: 0; top: 0; }
  .g-num { position: absolute; left: 25px; top: 23px; font: 300 29px/36px "Liberation Sans", sans-serif; color: #666; letter-spacing: -1px; }
  .g-num small { font-size: 16px; letter-spacing: 0; }
  .g-temp { position: absolute; left: 40px; top: 60px; font-size: 10.500px; line-height: 14px; color: #333; }

  .blocks { height: 33px; flex: none; display: flex; align-items: center; white-space: nowrap; padding-left: 43px; gap: 15.200px; font-size: 15px; color: #444; box-sizing: border-box; position: relative; }
  .blocks span.on { position: relative; color: #2f5ea8; }
  .blocks span.on::after { content: ""; position: absolute; left: -8px; right: -7px; bottom: -8px; height: 2px; background: #2f5ea8; }
  .plus { font-size: 22px; color: #666; font-weight: 700; line-height: 20px; margin-left: 3px; }
  .forum { margin-left: auto; margin-right: 17px; display: flex; align-items: center; gap: 6px; color: #2f5ea8; font-size: 16px; }
  .forum path { stroke: #2f5ea8; stroke-width: 2; }
  .forum rect { fill: #2f5ea8; }

  .status { height: 35px; flex: none; background: #fff; display: flex; align-items: center; white-space: nowrap; font-size: 15px; padding-left: 6px; box-sizing: border-box; }
  .ws { width: 84px; color: #1f5cae; font: 700 21px "Liberation Sans", sans-serif; letter-spacing: -1px; }
  .ws em { font-style: italic; font-size: 30px; line-height: 20px; }
  .i1 { margin-left: 42px; }
  .iv { font: 700 14.500px "Liberation Mono", monospace; margin-left: 9px; letter-spacing: .3px; }
  .i2 { margin-left: 24px; }
  .i3 { margin-left: 43px; color: #333; font-size: 14px; }
  .i3v { color: #333; margin-left: 19px; }
  .tip { margin-left: 438px; color: #2f5ea8; letter-spacing: .1px; }
  .acct { width: 68px; height: 23px; margin-left: 3px; background: #bccfe3; color: #333; text-align: center; line-height: 23px; font-size: 15px; }
  .a1 { margin-left: 181px; }
  .rdiv { width: 1px; height: 15px; background: #e00; margin-left: 13px; }
  .meter { width: 22px; height: 18px; margin-left: 15px; background: repeating-linear-gradient(0deg, #0a5c0a 0 1px, #128a12 1px 2px); border-bottom: 4px solid #2ee62e; box-sizing: border-box; }
  .signal { display: flex; align-items: flex-end; gap: 2px; height: 18px; margin-left: 8px; }
  .signal i { width: 4px; background: #2fc62f; }
  .sg5 { height: 5px; }
  .sg9 { height: 9px; }
  .sg13 { height: 13px; }
  .sg18 { height: 18px; }
  .clock { margin-left: 8px; font-size: 14.500px; color: #111; }

  .taskbar { height: 50px; flex: none; background: linear-gradient(90deg, #011a26, #001322 60%, #000e1c); display: flex; align-items: center; position: relative; }
  .tb { position: absolute; top: 0; height: 50px; display: flex; align-items: center; justify-content: center; width: 40px; }
  .win { left: 10px; }
  .search { left: 70px; }
  .search circle, .search path { fill: none; stroke: #fff; stroke-width: 1.500; }
  .view { left: 130px; }
  .view path { stroke: #fff; stroke-width: 1.300; }
  .ie { left: 194px; }
  .chrome { left: 256px; }
  .snip { left: 319px; }
  .ppt { left: 379px; }
  .tb-on { left: 432px; width: 61px; background: #3a4a55; }
  .ind { position: absolute; bottom: 0; height: 3px; background: #76b9ed; }
  .i-chrome { left: 251px; width: 51px; }
  .i-wh { left: 432px; width: 61px; }
  .tray { position: absolute; inset: 0; }
  .tray svg { position: absolute; top: 15px; }
  .tray path { stroke: #fff; stroke-width: 1.200; }
  .t-up { left: 1539px; top: 21px !important; }
  .t-bat { left: 1598px; }
  .t-wifi { left: 1629px; }
  .t-vol { left: 1658px; }
  .t-ime { position: absolute; left: 1690px; top: 12px; color: #fff; font-size: 17px; font-weight: 700; }
  .t-clock { position: absolute; left: 1716px; top: 2px; width: 82px; display: flex; flex-direction: column; align-items: center; color: #fff; font-size: 15px; line-height: 24px; }
  .t-note { left: 1820px; }
  .t-desk { left: 1868px; }
  .wm { position: absolute; left: 1745px; top: 16px; font-size: 18.500px; color: rgba(190, 190, 190, .62); white-space: nowrap; letter-spacing: .2px; }
</style>
